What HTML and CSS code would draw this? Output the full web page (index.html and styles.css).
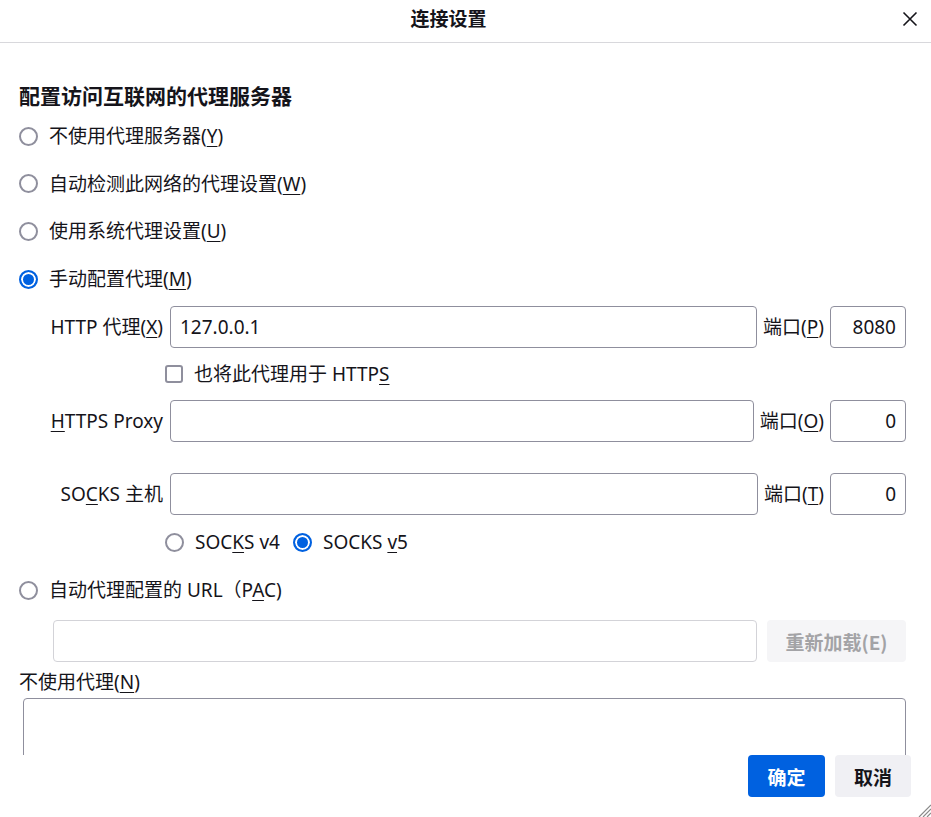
FILE: index.html
```html
<!DOCTYPE html>
<html lang="zh-CN">
<head>
<meta charset="utf-8">
<title>连接设置</title>
<link rel="stylesheet" href="styles.css">
</head>
<body>
<div class="dialog">
  <header class="titlebar">
    <div class="title">连接设置</div>
    <button class="close" aria-label="关闭">
      <svg width="16" height="16" viewBox="0 0 16 16"><path d="M1.5 1.5 L14.5 14.5 M14.5 1.5 L1.5 14.5" stroke="#15141a" stroke-width="1.6" fill="none"/></svg>
    </button>
  </header>

  <main class="content">
    <h1 class="heading">配置访问互联网的代理服务器</h1>

    <div class="opt"><span class="radio"></span><span>不使用代理服务器(<u>Y</u>)</span></div>
    <div class="opt o2"><span class="radio"></span><span>自动检测此网络的代理设置(<u>W</u>)</span></div>
    <div class="opt"><span class="radio"></span><span>使用系统代理设置(<u>U</u>)</span></div>
    <div class="opt"><span class="radio checked"></span><span>手动配置代理(<u>M</u>)</span></div>

    <div class="prow r-http">
      <label class="plabel">HTTP 代理(<u>X</u>)</label>
      <input class="field" type="text" value="127.0.0.1">
      <label class="portlabel">端口(<u>P</u>)</label>
      <input class="field port" type="text" value="8080">
    </div>

    <div class="checkrow">
      <span class="checkbox"></span><span>也将此代理用于 HTTP<u>S</u></span>
    </div>

    <div class="prow">
      <label class="plabel"><u>H</u>TTPS Proxy</label>
      <input class="field" type="text" value="">
      <label class="portlabel">端口(<u>O</u>)</label>
      <input class="field port" type="text" value="0">
    </div>

    <div class="prow r-socks">
      <label class="plabel">SO<u>C</u>KS 主机</label>
      <input class="field" type="text" value="">
      <label class="portlabel">端口(<u>T</u>)</label>
      <input class="field port" type="text" value="0">
    </div>

    <div class="socksrow">
      <span class="radio"></span><span class="sv">SOC<u>K</u>S v4</span>
      <span class="radio checked"></span><span>SOCKS <u>v</u>5</span>
    </div>

    <div class="opt pac"><span class="radio"></span><span>自动代理配置的 URL（P<u>A</u>C)</span></div>

    <div class="pacrow">
      <input class="field disabled" type="text" value="" disabled>
      <button class="reload" disabled>重新加载(E)</button>
    </div>

    <div class="nolabel">不使用代理(<u>N</u>)</div>
    <textarea class="noproxy"></textarea>
  </main>

  <footer class="footer">
    <button class="btn primary">确定</button>
    <button class="btn secondary">取消</button>
    <svg class="grip" width="13" height="13" viewBox="0 0 13 13"><path d="M13 1 L1 13 M13 5 L5 13 M13 9 L9 13" stroke="#8a8a8a" stroke-width="1.2" fill="none"/></svg>
  </footer>
</div>
</body>
</html>
```

FILE: styles.css
```css
* { box-sizing: border-box; }

html, body {
  margin: 0;
  padding: 0;
  background: #ffffff;
}

body {
  font-family: "Noto Sans", "Noto Sans CJK SC", sans-serif;
  font-size: 19px;
  color: #15141a;
  width: 931px;
  height: 817px;
  overflow: hidden;
}

.dialog {
  display: flex;
  flex-direction: column;
  height: 817px;
}

.titlebar {
  height: 43px;
  flex: none;
  border-bottom: 1px solid #d8d8dc;
  display: flex;
  align-items: center;
  justify-content: center;
  padding-right: 34px;
  position: relative;
}

.title {
  font-weight: 700;
  font-size: 19px;
  line-height: 24px;
  margin-top: -6px;
  font-family: "Noto Sans CJK SC", sans-serif;
}

.close {
  position: absolute;
  right: 10px;
  top: 9px;
  width: 22px;
  height: 20px;
  border: none;
  background: transparent;
  padding: 0;
  display: flex;
  align-items: center;
  justify-content: center;
}

.content {
  height: 712px;
  flex: none;
  overflow: hidden;
  padding: 0 25px 0 19px;
}

.heading {
  margin: 38px 0 0 0;
  font-size: 21px;
  line-height: 28px;
  font-weight: 700;
  font-family: "Noto Sans CJK SC", sans-serif;
}

.opt {
  height: 48px;
  display: flex;
  align-items: center;
  line-height: 24px;
}
.opt:first-of-type { margin-top: 3px; }
.o2 { height: 47px; }

.radio {
  width: 19px;
  height: 19px;
  border-radius: 50%;
  border: 2px solid #8f8f9d;
  flex: none;
  margin-right: 11px;
  background: #fff;
}
.radio.checked {
  border-color: #0061e0;
  background: #0061e0;
  box-shadow: inset 0 0 0 2px #ffffff;
}

u { text-decoration: underline; text-underline-offset: 3px; text-decoration-thickness: 1px; }

.prow {
  height: 42px;
  display: flex;
  align-items: center;
  padding-left: 30px;
}
.r-http { margin-top: 3px; }
.r-socks { margin-top: 31px; }

.plabel {
  width: 121px;
  flex: none;
  text-align: right;
  padding-right: 7px;
  white-space: nowrap;
  line-height: 24px;
}

.field {
  height: 42px;
  border: 1px solid #8f8f9d;
  border-radius: 4px;
  font-family: "Noto Sans", "Noto Sans CJK SC", sans-serif;
  font-size: 19px;
  color: #15141a;
  padding: 0 9px;
  flex: 1;
  min-width: 0;
  background: #fff;
  outline: none;
}

.portlabel {
  flex: none;
  padding: 0 6px;
  white-space: nowrap;
  line-height: 24px;
}

.field.port {
  flex: none;
  width: 76px;
  text-align: right;
}

.checkrow {
  height: 52px;
  display: flex;
  align-items: center;
  padding-left: 146px;
  line-height: 24px;
}

.checkbox {
  width: 18px;
  height: 18px;
  border: 2px solid #8f8f9d;
  border-radius: 3px;
  margin-right: 11px;
  flex: none;
}

.socksrow {
  height: 54px;
  display: flex;
  align-items: center;
  padding-left: 146px;
  line-height: 24px;
}
.sv { margin-right: 13px; }

.opt.pac { height: 42px; margin-top: 0; }

.pacrow {
  display: flex;
  align-items: center;
  gap: 10px;
  margin-top: 9px;
  padding-left: 34px;
  height: 42px;
}

.field.disabled {
  border-color: #d3d3d8;
  background: #fff;
}

.reload {
  width: 139px;
  height: 42px;
  flex: none;
  border: none;
  border-radius: 4px;
  background: #f5f5f7;
  color: #a3a3a6;
  font-family: "Noto Sans CJK SC", sans-serif;
  font-weight: 700;
  font-size: 19px;
}

.nolabel {
  margin-top: 8px;
  line-height: 24px;
  font-family: "Noto Sans", "Noto Sans CJK SC", sans-serif;
}

.noproxy {
  display: block;
  margin: 4px 0 0 4px;
  width: 883px;
  height: 120px;
  border: 1px solid #8f8f9d;
  border-radius: 4px;
  resize: none;
  outline: none;
}

.footer {
  flex: 1;
  display: flex;
  justify-content: flex-end;
  align-items: flex-start;
  gap: 10px;
  padding-right: 20px;
  position: relative;
}

.btn {
  height: 42px;
  border: none;
  border-radius: 4px;
  font-family: "Noto Sans CJK SC", sans-serif;
  font-weight: 700;
  font-size: 19px;
  padding: 0;
}
.btn.primary {
  width: 77px;
  background: #0061e0;
  color: #ffffff;
}
.btn.secondary {
  width: 76px;
  background: #f0f0f4;
  color: #15141a;
}

.grip {
  position: absolute;
  right: 0;
  bottom: 0;
}
```
